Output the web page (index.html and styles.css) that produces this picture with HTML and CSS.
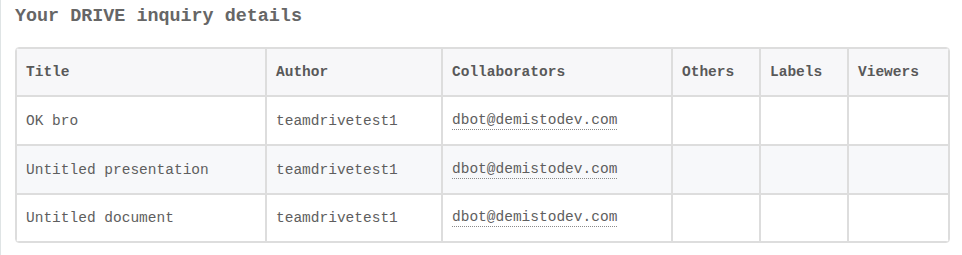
FILE: index.html
```html
<!DOCTYPE html>
<html lang="en">
<head>
<meta charset="utf-8">
<title>Your DRIVE inquiry details</title>
<link rel="stylesheet" href="styles.css">
</head>
<body>
<div class="page">
  <h3 class="heading">Your DRIVE inquiry details</h3>
  <div class="grid" role="table">
    <div class="cell head">Title</div>
    <div class="cell head">Author</div>
    <div class="cell head">Collaborators</div>
    <div class="cell head">Others</div>
    <div class="cell head">Labels</div>
    <div class="cell head">Viewers</div>

    <div class="cell">OK bro</div>
    <div class="cell">teamdrivetest1</div>
    <div class="cell"><a class="mail" href="#">dbot@demistodev.com</a></div>
    <div class="cell"></div>
    <div class="cell"></div>
    <div class="cell"></div>

    <div class="cell alt">Untitled presentation</div>
    <div class="cell alt">teamdrivetest1</div>
    <div class="cell alt"><a class="mail" href="#">dbot@demistodev.com</a></div>
    <div class="cell alt"></div>
    <div class="cell alt"></div>
    <div class="cell alt"></div>

    <div class="cell">Untitled document</div>
    <div class="cell">teamdrivetest1</div>
    <div class="cell"><a class="mail" href="#">dbot@demistodev.com</a></div>
    <div class="cell"></div>
    <div class="cell"></div>
    <div class="cell"></div>
  </div>
</div>
</body>
</html>
```
FILE: styles.css
```css
html, body {
  margin: 0;
  padding: 0;
  background: #ffffff;
}

.page {
  box-sizing: border-box;
  min-height: 100vh;
  border-left: 1px solid #dfe4e5;
  padding: 6px 0 0 14px;
  font-family: "Liberation Mono", "Courier New", monospace;
  color: #555555;
}

.heading {
  margin: 0 0 19px 0;
  font-size: 18.4px;
  line-height: 22px;
  font-weight: bold;
  color: #666666;
}

.grid {
  display: grid;
  grid-template-columns: 250px 176px 230px 88px 88px 101px;
  grid-template-rows: 48px 49px 49px 48px;
  width: max-content;
  border: 1px solid #dddddd;
  border-radius: 4px;
  overflow: hidden;
}

.cell {
  box-sizing: border-box;
  border: 1px solid #dddddd;
  padding: 0 9px;
  display: flex;
  align-items: center;
  font-size: 14.5px;
  line-height: 18px;
  color: #5e5e5e;
  white-space: nowrap;
}

.head {
  background: #f7f7f9;
  font-weight: bold;
  color: #595959;
}

.alt {
  background: #f7f8fa;
}

.mail {
  color: #5e5e5e;
  text-decoration: none;
  border-bottom: 1px dotted #8a8a8a;
  line-height: 17px;
}
```
